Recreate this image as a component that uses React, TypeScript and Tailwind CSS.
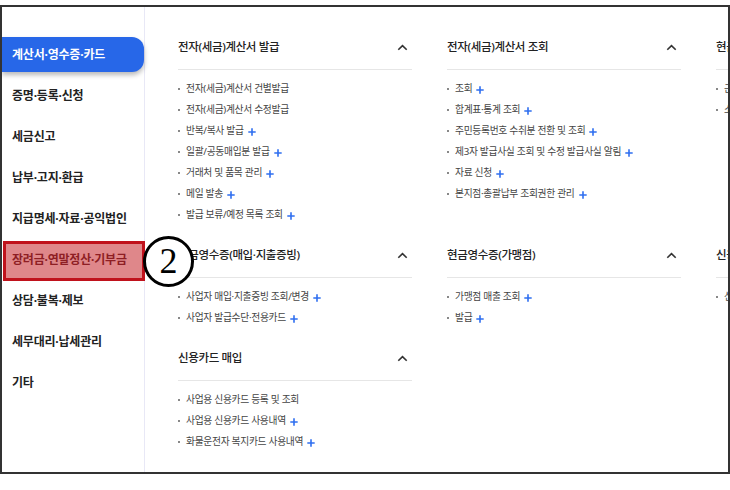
import { Fragment } from "react";

type Item = [label: string, more?: boolean];

type Section = {
  title: string;
  items: Item[];
};

const menu = [
  "계산서·영수증·카드",
  "증명·등록·신청",
  "세금신고",
  "납부·고지·환급",
  "지급명세·자료·공익법인",
  "장려금·연말정산·기부금",
  "상담·불복·제보",
  "세무대리·납세관리",
  "기타"
];

// rows of the mega menu, one cell per column (each cell can stack sections)
const rows: Section[][][] = [
  [
    [
      {
        title: "전자(세금)계산서 발급",
        items: [
          ["전자(세금)계산서 건별발급"],
          ["전자(세금)계산서 수정발급"],
          ["반복/복사 발급", true],
          ["일괄/공동매입분 발급", true],
          ["거래처 및 품목 관리", true],
          ["메일 발송", true],
          ["발급 보류/예정 목록 조회", true]
        ]
      }
    ],
    [
      {
        title: "전자(세금)계산서 조회",
        items: [
          ["조회", true],
          ["합계표·통계 조회", true],
          ["주민등록번호 수취분 전환 및 조회", true],
          ["제3자 발급사실 조회 및 수정 발급사실 알림", true],
          ["자료 신청", true],
          ["본지점·총괄납부 조회권한 관리", true]
        ]
      }
    ],
    [
      {
        title: "현금영수증(근로자)",
        items: [
          ["근로자 사용내역 조회", true],
          ["소득공제 신청", true]
        ]
      }
    ]
  ],
  [
    [
      {
        title: "현금영수증(매입·지출증빙)",
        items: [
          ["사업자 매입·지출증빙 조회/변경", true],
          ["사업자 발급수단·전용카드", true]
        ]
      },
      {
        title: "신용카드 매입",
        items: [
          ["사업용 신용카드 등록 및 조회"],
          ["사업용 신용카드 사용내역", true],
          ["화물운전자 복지카드 사용내역", true]
        ]
      }
    ],
    [
      {
        title: "현금영수증(가맹점)",
        items: [
          ["가맹점 매출 조회", true],
          ["발급", true]
        ]
      }
    ],
    [
      {
        title: "신용카드(근로자)",
        items: [["신용카드 사용내역 조회", true]]
      }
    ]
  ]
];

function Plus() {
  return (
    <svg className="ml-[4px] h-[8px] w-[8px] shrink-0" viewBox="0 0 8 8" aria-hidden="true">
      <path d="M4 0.3v7.4M0.3 4h7.4" stroke="#2f6ff0" strokeWidth="1.6" />
    </svg>
  );
}

function Chevron() {
  return (
    <svg className="h-[7px] w-[11px]" viewBox="0 0 11 7" aria-hidden="true">
      <polyline points="1.3,5.8 5.5,1.6 9.7,5.8" fill="none" stroke="#333" strokeWidth="1.6" />
    </svg>
  );
}

function MenuSection({ section }: { section: Section }) {
  return (
    <div className="w-[234px]">
      <div className="flex h-[20px] items-center justify-between pr-[4px]">
        <span className="text-[11.5px] font-medium tracking-[-0.35px] whitespace-nowrap text-[#222]">
          {section.title}
        </span>
        <Chevron />
      </div>
      <div className="h-[13px] border-b border-[#e6e6e6]" />
      <ul className="pt-[9px]">
        {section.items.map(([label, more]) => (
          <li
            key={label}
            className="flex h-[21px] items-center whitespace-nowrap text-[9.75px] tracking-[-0.3px] text-[#444]"
          >
            <span className="mr-[6px] mb-[2px] h-[2px] w-[2px] shrink-0 bg-[#888]" aria-hidden="true" />
            <span>{label}</span>
            {more ? <Plus /> : null}
          </li>
        ))}
      </ul>
    </div>
  );
}

export default function App() {
  return (
    <div
      className="bg-white pt-[5px]"
      style={{ fontFamily: '"Noto Sans", "Noto Sans CJK KR", sans-serif' }}
    >
      <div className="flex h-[469px] w-[730px] overflow-hidden border-2 border-[#333]">
        <nav className="flex w-[143px] shrink-0 flex-col gap-[6px] border-r border-[#e8e8f6] pt-[30px]">
          {menu.map((label, index) => {
            if (index === 0) {
              return (
                <div
                  key={label}
                  className="flex h-[35px] items-center rounded-r-[12px] bg-[#2767e8] pl-[10px] text-[12px] font-bold tracking-[-0.2px] text-white shadow-[0_3px_5px_rgba(0,0,0,0.28)]"
                >
                  {label}
                </div>
              );
            }
            if (index === 5) {
              return (
                <div
                  key={label}
                  className="relative flex h-[35px] items-center pl-[10px] text-[12px] font-bold tracking-[-0.2px]"
                >
                  <span className="absolute -top-[1px] -bottom-[4px] left-[1px] -right-[1px] border-[3px] border-[#c0121c] bg-[#df878a]" />
                  <span className="relative text-[#8e1e24]">{label}</span>
                  <span className="absolute left-[141px] -top-[6px] z-20 flex h-[51px] w-[51px] items-center justify-center rounded-full border-[3px] border-black bg-white">
                    <span
                      className="pb-[1px] text-[36px] font-normal leading-none text-black"
                      style={{ fontFamily: '"Liberation Serif", serif' }}
                    >
                      2
                    </span>
                  </span>
                </div>
              );
            }
            return (
              <div
                key={label}
                className="flex h-[35px] items-center pl-[10px] text-[12px] font-bold tracking-[-0.2px] text-[#222]"
              >
                {label}
              </div>
            );
          })}
        </nav>
        <div className="min-w-0 flex-1 pt-[30px] pl-[33px]">
          <div className="grid w-max grid-cols-[234px_234px_234px] gap-x-[35px] gap-y-[19px]">
            {rows.map((row, r) => (
              <Fragment key={r}>
                {row.map((cell, c) => (
                  <div key={c} className="flex flex-col gap-[19px]">
                    {cell.map((section) => (
                      <MenuSection key={section.title} section={section} />
                    ))}
                  </div>
                ))}
              </Fragment>
            ))}
          </div>
        </div>
      </div>
    </div>
  );
}
